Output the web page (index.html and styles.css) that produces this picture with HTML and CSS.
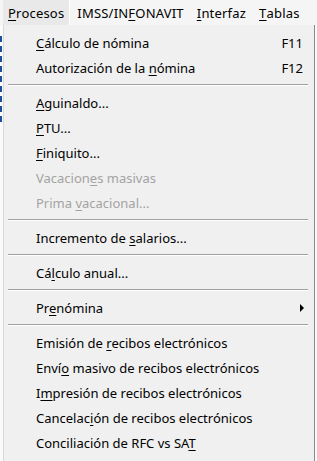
FILE: index.html
```html
<!DOCTYPE html>
<html lang="es">
  <head>
    <meta charset="UTF-8" />
    <title>Procesos</title>
    <link rel="stylesheet" href="styles.css">
  </head>
  <body>
    <div class="behind"></div>
    <div class="menubar">
      <div class="bar-item active"><u>P</u>rocesos</div>
      <div class="bar-item">IMSS/IN<u>F</u>ONAVIT</div>
      <div class="bar-item"><u>I</u>nterfaz</div>
      <div class="bar-item"><u>T</u>ablas</div>
    </div>
    <div class="dropdown">
      <div class="row"><span><u>C</u>álculo de nómina</span><span class="key">F11</span></div>
      <div class="row"><span>Autorización de la <u>n</u>ómina</span><span class="key">F12</span></div>
      <div class="sep"></div>
      <div class="row"><span><u>A</u>guinaldo...</span></div>
      <div class="row"><span><u>P</u>TU...</span></div>
      <div class="row"><span><u>F</u>iniquito...</span></div>
      <div class="row off"><span>Vacacion<u>e</u>s masivas</span></div>
      <div class="row off"><span>Prima <u>v</u>acacional...</span></div>
      <div class="sep"></div>
      <div class="row"><span>Incremento de <u>s</u>alarios...</span></div>
      <div class="sep"></div>
      <div class="row"><span>Cá<u>l</u>culo anual...</span></div>
      <div class="sep"></div>
      <div class="row"><span>Pr<u>e</u>nómina</span><span class="arrow"></span></div>
      <div class="sep"></div>
      <div class="row"><span>Emisión de <u>r</u>ecibos electrónicos</span></div>
      <div class="row"><span>Enví<u>o</u> masivo de recibos electrónicos</span></div>
      <div class="row"><span>I<u>m</u>presión de recibos electrónicos</span></div>
      <div class="row"><span>Cancelac<u>i</u>ón de recibos electrónicos</span></div>
      <div class="row"><span>Conciliación de RFC vs SA<u>T</u></span></div>
    </div>
  </body>
</html>
```

FILE: styles.css
```css
body {
  margin: 0;
  background: #fafafa;
  font-family: "Noto Sans", "Open Sans", sans-serif;
  font-size: 13px;
  color: #000;
  position: relative;
  height: 461px;
  overflow: hidden;
}
u {
  text-underline-offset: 2px;
}
.behind {
  position: absolute;
  left: 0;
  top: 36px;
  width: 2px;
  height: 90px;
  background: repeating-linear-gradient(#1a4fa0 0 6px, transparent 6px 10px);
}
.menubar {
  display: flex;
  height: 25px;
  background: #f5f5f5;
  padding-left: 3px;
  letter-spacing: 0.2px;
}
.bar-item {
  display: flex;
  align-items: center;
  padding: 0 6px 0 7px;
}
.active {
  background: #e9e9e9;
  border-right: 1px solid #fff;
  padding: 0 5px 0 5px;
}
.dropdown {
  margin-left: 3px;
  width: 310px;
  background: #f0f0f0;
  border-left: 1px solid #d8d8d8;
  border-right: 1px solid #8a8a8a;
  padding-top: 5px;
  height: 431px;
}
.row {
  height: 25px;
  display: flex;
  align-items: center;
  justify-content: space-between;
  padding: 0 10px 0 32px;
}
.off {
  color: #a3a3a3;
}
.key {
  padding-right: 1px;
}
.sep {
  height: 10px;
  margin: 0 6px 0 4px;
  background: linear-gradient(transparent 4px, #a0a0a0 4px 5px, #fff 5px 6px, transparent 6px);
}
.arrow {
  width: 0;
  height: 0;
  border-top: 4px solid transparent;
  border-bottom: 4px solid transparent;
  border-left: 4px solid #000;
}
```
